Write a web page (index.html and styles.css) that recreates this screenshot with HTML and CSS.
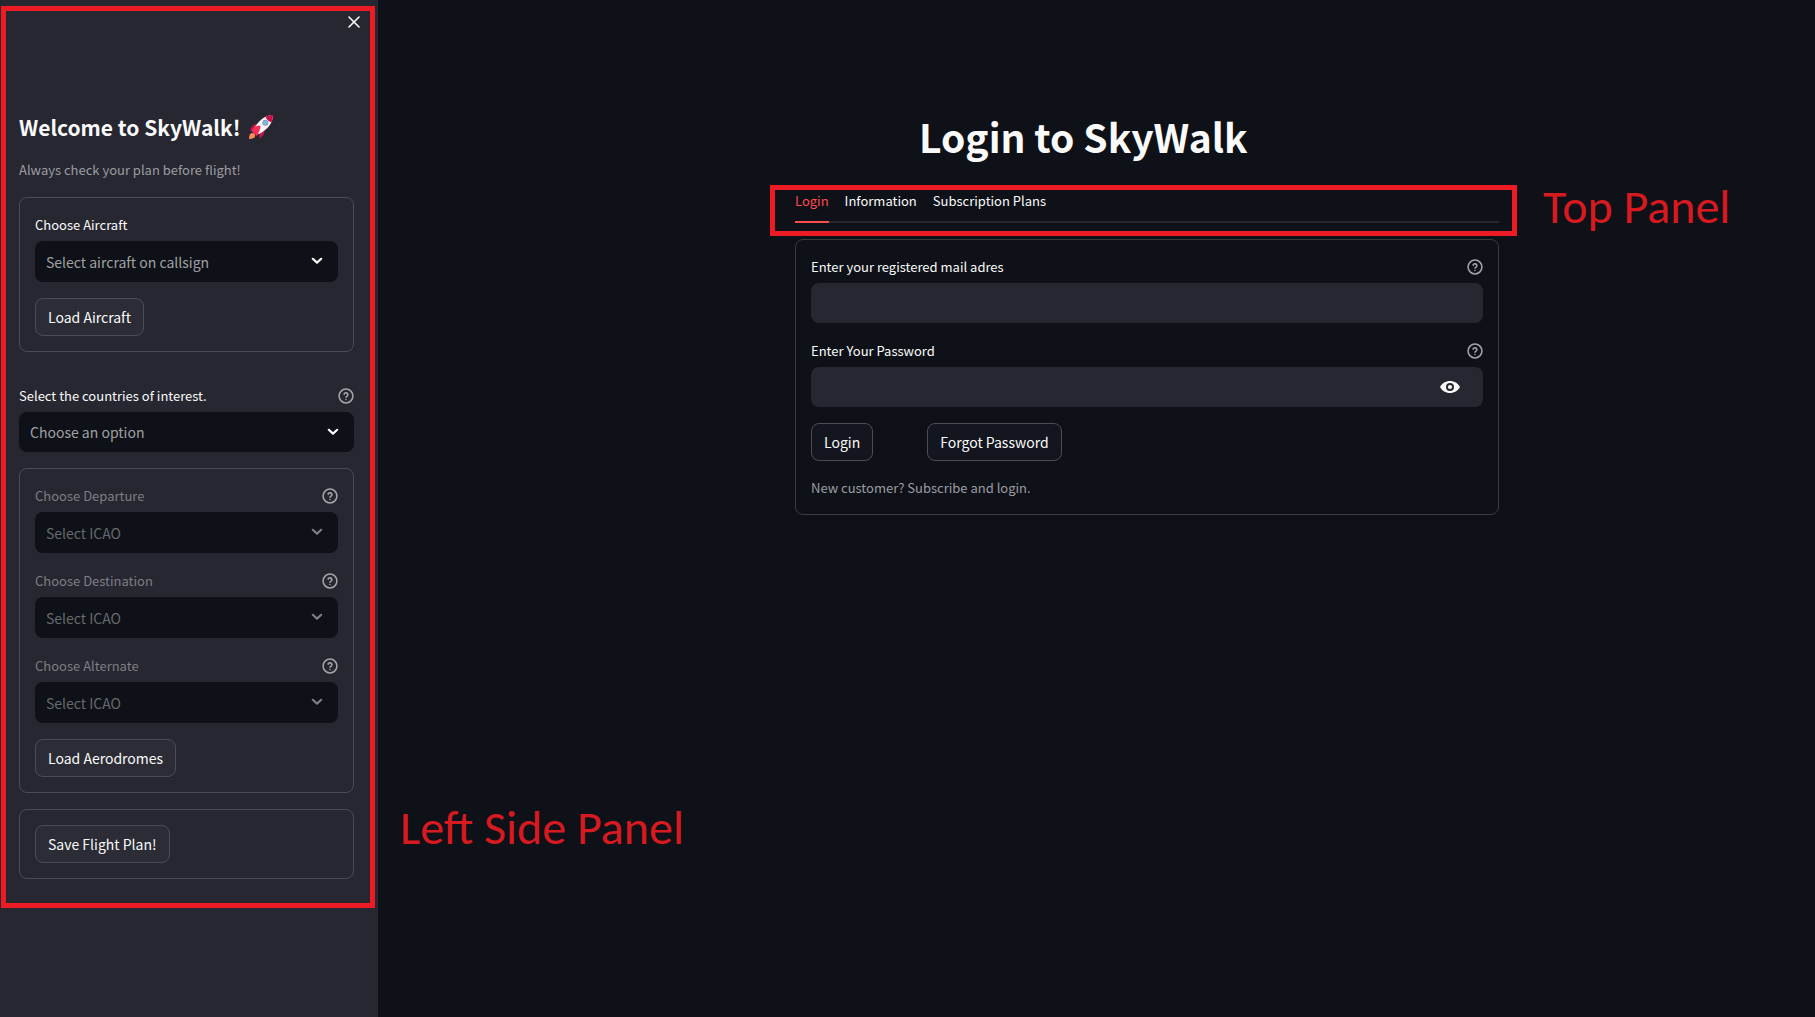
FILE: index.html
```html
<!DOCTYPE html>
<html lang="en">
<head>
<meta charset="utf-8">
<title>SkyWalk</title>
<link rel="stylesheet" href="styles.css">
</head>
<body>
<svg class="sprite" aria-hidden="true">
  <symbol id="help" viewBox="0 0 24 24"><g fill="none" stroke="currentColor" stroke-width="2.3" stroke-linecap="round" stroke-linejoin="round"><circle cx="12" cy="12" r="10.4"/><path d="M9.1 9.2a3 3 0 0 1 5.8 1c0 2-2.9 2.4-2.9 3.8M12 17.2v.1"/></g></symbol>
  <symbol id="chevron" viewBox="0 0 12 8"><path d="M1.8 1.8 6 5.6l4.200-3.800" fill="none" stroke="currentColor" stroke-width="2.200" stroke-linecap="round" stroke-linejoin="round"/></symbol>
</svg>
<div class="app">
  <aside class="sidebar">
    <div class="sidebar-top"><button class="icon-button" type="button" aria-label="Close sidebar"><svg width="12" height="12" viewBox="0 0 12 12"><path d="M1 1l10 10M11 1 1 11" stroke="currentColor" stroke-width="1.600" stroke-linecap="round"/></svg></button></div>
    <h2 class="welcome">Welcome to SkyWalk!
      <svg class="rocket" viewBox="0 0 24 24" aria-hidden="true"><path d="M9.500 8.500C5 8.500 2.500 11 .8 16l5-1.500z M15.500 14c.5 4-1 7-5 9.500l-.5-6z" fill="#be1748"/><path d="M24 0C17 .2 11 4 6 12l-1.500 4L8 19.500 12 18C20 13 24 7 24 0z" fill="#f4f4f6"/><path d="M24 0c-2.500 0-5 .5-7.500 1.700 1.200 2.800 3 4.600 5.800 5.800C23.500 5 24 2.500 24 0z" fill="#c9104a"/><path d="M2.500 16C4 12.500 7 10.500 11.500 10.500 11.500 14 10 18 7.500 21z" fill="#f72d5c"/><circle cx="16.300" cy="7.700" r="3" fill="#8a9fae"/><circle cx="16.300" cy="7.700" r="2" fill="#72bff0"/><path d="M0 24c0-4 1-6 3-6s3.500 1.500 3 3.500S3.500 23.500 0 24z" fill="#ff8a56"/></svg>
    </h2>
    <p class="caption">Always check your plan before flight!</p>
    <form class="card">
      <div class="field"><div class="label-row"><label for="aircraft">Choose Aircraft</label></div>
        <div class="control"><select id="aircraft"><option>Select aircraft on callsign</option></select><svg class="chevron"><use href="#chevron"/></svg></div></div>
      <button class="button" type="button">Load Aircraft</button>
    </form>
    <div class="field countries"><div class="label-row"><label for="countries">Select the countries of interest.</label><svg class="help"><use href="#help"/></svg></div>
      <div class="control"><select id="countries"><option>Choose an option</option></select><svg class="chevron"><use href="#chevron"/></svg></div></div>
    <form class="card">
      <div class="field disabled"><div class="label-row"><label for="departure">Choose Departure</label><svg class="help"><use href="#help"/></svg></div>
        <div class="control"><select id="departure" disabled><option>Select ICAO</option></select><svg class="chevron"><use href="#chevron"/></svg></div></div>
      <div class="field disabled"><div class="label-row"><label for="destination">Choose Destination</label><svg class="help"><use href="#help"/></svg></div>
        <div class="control"><select id="destination" disabled><option>Select ICAO</option></select><svg class="chevron"><use href="#chevron"/></svg></div></div>
      <div class="field disabled"><div class="label-row"><label for="alternate">Choose Alternate</label><svg class="help"><use href="#help"/></svg></div>
        <div class="control"><select id="alternate" disabled><option>Select ICAO</option></select><svg class="chevron"><use href="#chevron"/></svg></div></div>
      <button class="button" type="button">Load Aerodromes</button>
    </form>
    <form class="card"><button class="button" type="button">Save Flight Plan!</button></form>
    <div class="mark mark-side"></div>
    <span class="note note-side">Left Side Panel</span>
  </aside>
  <main class="main">
    <div class="content">
      <h1 class="title">Login to SkyWalk</h1>
      <div class="tabs-wrap">
        <nav class="tabs"><a class="tab active" href="#login">Login</a><a class="tab" href="#information">Information</a><a class="tab" href="#plans">Subscription Plans</a></nav>
        <div class="mark mark-top"></div>
        <span class="note note-top">Top Panel</span>
      </div>
      <form class="card" id="login">
        <div class="field"><div class="label-row"><label for="mail">Enter your registered mail adres</label><svg class="help"><use href="#help"/></svg></div>
          <div class="control"><input id="mail" type="email"></div></div>
        <div class="field"><div class="label-row"><label for="password">Enter Your Password</label><svg class="help"><use href="#help"/></svg></div>
          <div class="control"><input id="password" type="password"><button class="icon-button reveal" type="button" aria-label="Show password"><svg width="20" height="14" viewBox="0 0 20 14"><path fill="currentColor" fill-rule="evenodd" d="M10 1C5.500 1 2 3.300 0 7c2 3.700 5.500 6 10 6s8-2.300 10-6c-2-3.700-5.500-6-10-6zm0 10a4 4 0 1 1 0-8 4 4 0 0 1 0 8zm0-1.900a2.100 2.100 0 1 0 0-4.200 2.100 2.100 0 0 0 0 4.200z"/></svg></button></div></div>
        <div class="actions"><button class="button" type="button">Login</button><button class="button" type="button">Forgot Password</button></div>
        <p class="caption">New customer? Subscribe and login.</p>
      </form>
    </div>
  </main>
</div>
</body>
</html>
```
FILE: styles.css
```css
:root {
  --ground: #0e1117;
  --panel: #262730;
  --text: #fafafa;
  --line: #4b4c54;
  --accent: #ff4b4b;
  --mark: #ed1c24;
}
* { box-sizing: border-box; }
body {
  margin: 0;
  background: var(--ground);
  color: var(--text);
  font: 14px/24px "Noto Sans CJK JP", "Noto Sans", sans-serif;
}
h1, h2, p { margin: 0; }
.sprite { position: absolute; width: 0; height: 0; }
.app { display: flex; min-height: 100vh; }
.sidebar {
  position: relative;
  flex: 0 0 378px;
  padding: 12px 24px 24px 19px;
  background: var(--panel);
  display: flex;
  flex-direction: column;
  gap: 16px;
}
.sidebar-top { display: flex; justify-content: flex-end; margin-right: -10px; height: 83px; }
.icon-button {
  display: grid;
  place-items: center;
  width: 20px;
  height: 20px;
  padding: 0;
  border: 0;
  background: none;
  color: var(--text);
}
.welcome { display: flex; align-items: center; gap: 9px; font-size: 21px; line-height: 32px; font-weight: 700; }
.rocket { width: 24px; height: 24px; }
.caption { font-size: 13px; line-height: 22px; color: #9c9da3; }
.card {
  display: flex;
  flex-direction: column;
  gap: 16px;
  align-items: stretch;
  padding: 15px;
  border: 1px solid var(--line);
  border-radius: 8px;
}
.field { display: flex; flex-direction: column; gap: 4px; }
.countries { margin-top: 16px; }
.label-row { display: flex; justify-content: space-between; align-items: center; height: 24px; font-size: 13px; }
.help { width: 16px; height: 16px; color: #a4a5a9; }
.control { position: relative; }
select, input {
  display: block;
  width: 100%;
  height: 40px;
  padding: 0 11px;
  border: 0;
  border-radius: 8px;
  appearance: none;
  font: inherit;
  font-size: 14px;
  color: #a0a1a3;
  background: var(--ground);
  opacity: 1;
}
.card select { height: 41px; }
input { background: var(--panel); color: var(--text); }
.chevron { position: absolute; right: 15px; top: 16px; width: 12px; height: 8px; pointer-events: none; }
.disabled label { color: #7d7e84; }
.disabled select { color: #67696c; }
.disabled .chevron { color: #7d7e82; }
.button {
  align-self: flex-start;
  height: 38px;
  padding: 0 12px;
  border: 1px solid var(--line);
  border-radius: 8px;
  background: #2b2c36;
  color: var(--text);
  font: inherit;
}
.main { flex: 1; min-width: 0; padding: 108px 0 40px 101px; }
.main .button { background: #13161e; }
.main .card { border-color: #3a3c42; }
.content { max-width: 704px; margin: 0 auto; }
.title { font-size: 39px; line-height: 56px; font-weight: 700; padding-left: 124px; }
.tabs-wrap { position: relative; margin: 25px 0 16px; }
.tabs { display: flex; gap: 16px; height: 34px; border-bottom: 2px solid var(--panel); font-size: 13px; }
.tab { height: 34px; color: var(--text); text-decoration: none; }
.active { color: var(--accent); border-bottom: 2px solid var(--accent); }
.reveal { position: absolute; right: 23px; top: 10px; }
.actions { display: flex; gap: 54px; }
.mark { position: absolute; border: 5px solid var(--mark); pointer-events: none; }
.mark-side { inset: 6px 3px auto 1px; height: 902px; }
.mark-top { inset: -4px -18px -13px -25px; }
.note { position: absolute; white-space: nowrap; font: 48px/56px Carlito, Lato, sans-serif; color: #d71920; }
.note-side { left: 400px; top: 800px; }
.note-top { left: 748px; top: -10px; }
```
